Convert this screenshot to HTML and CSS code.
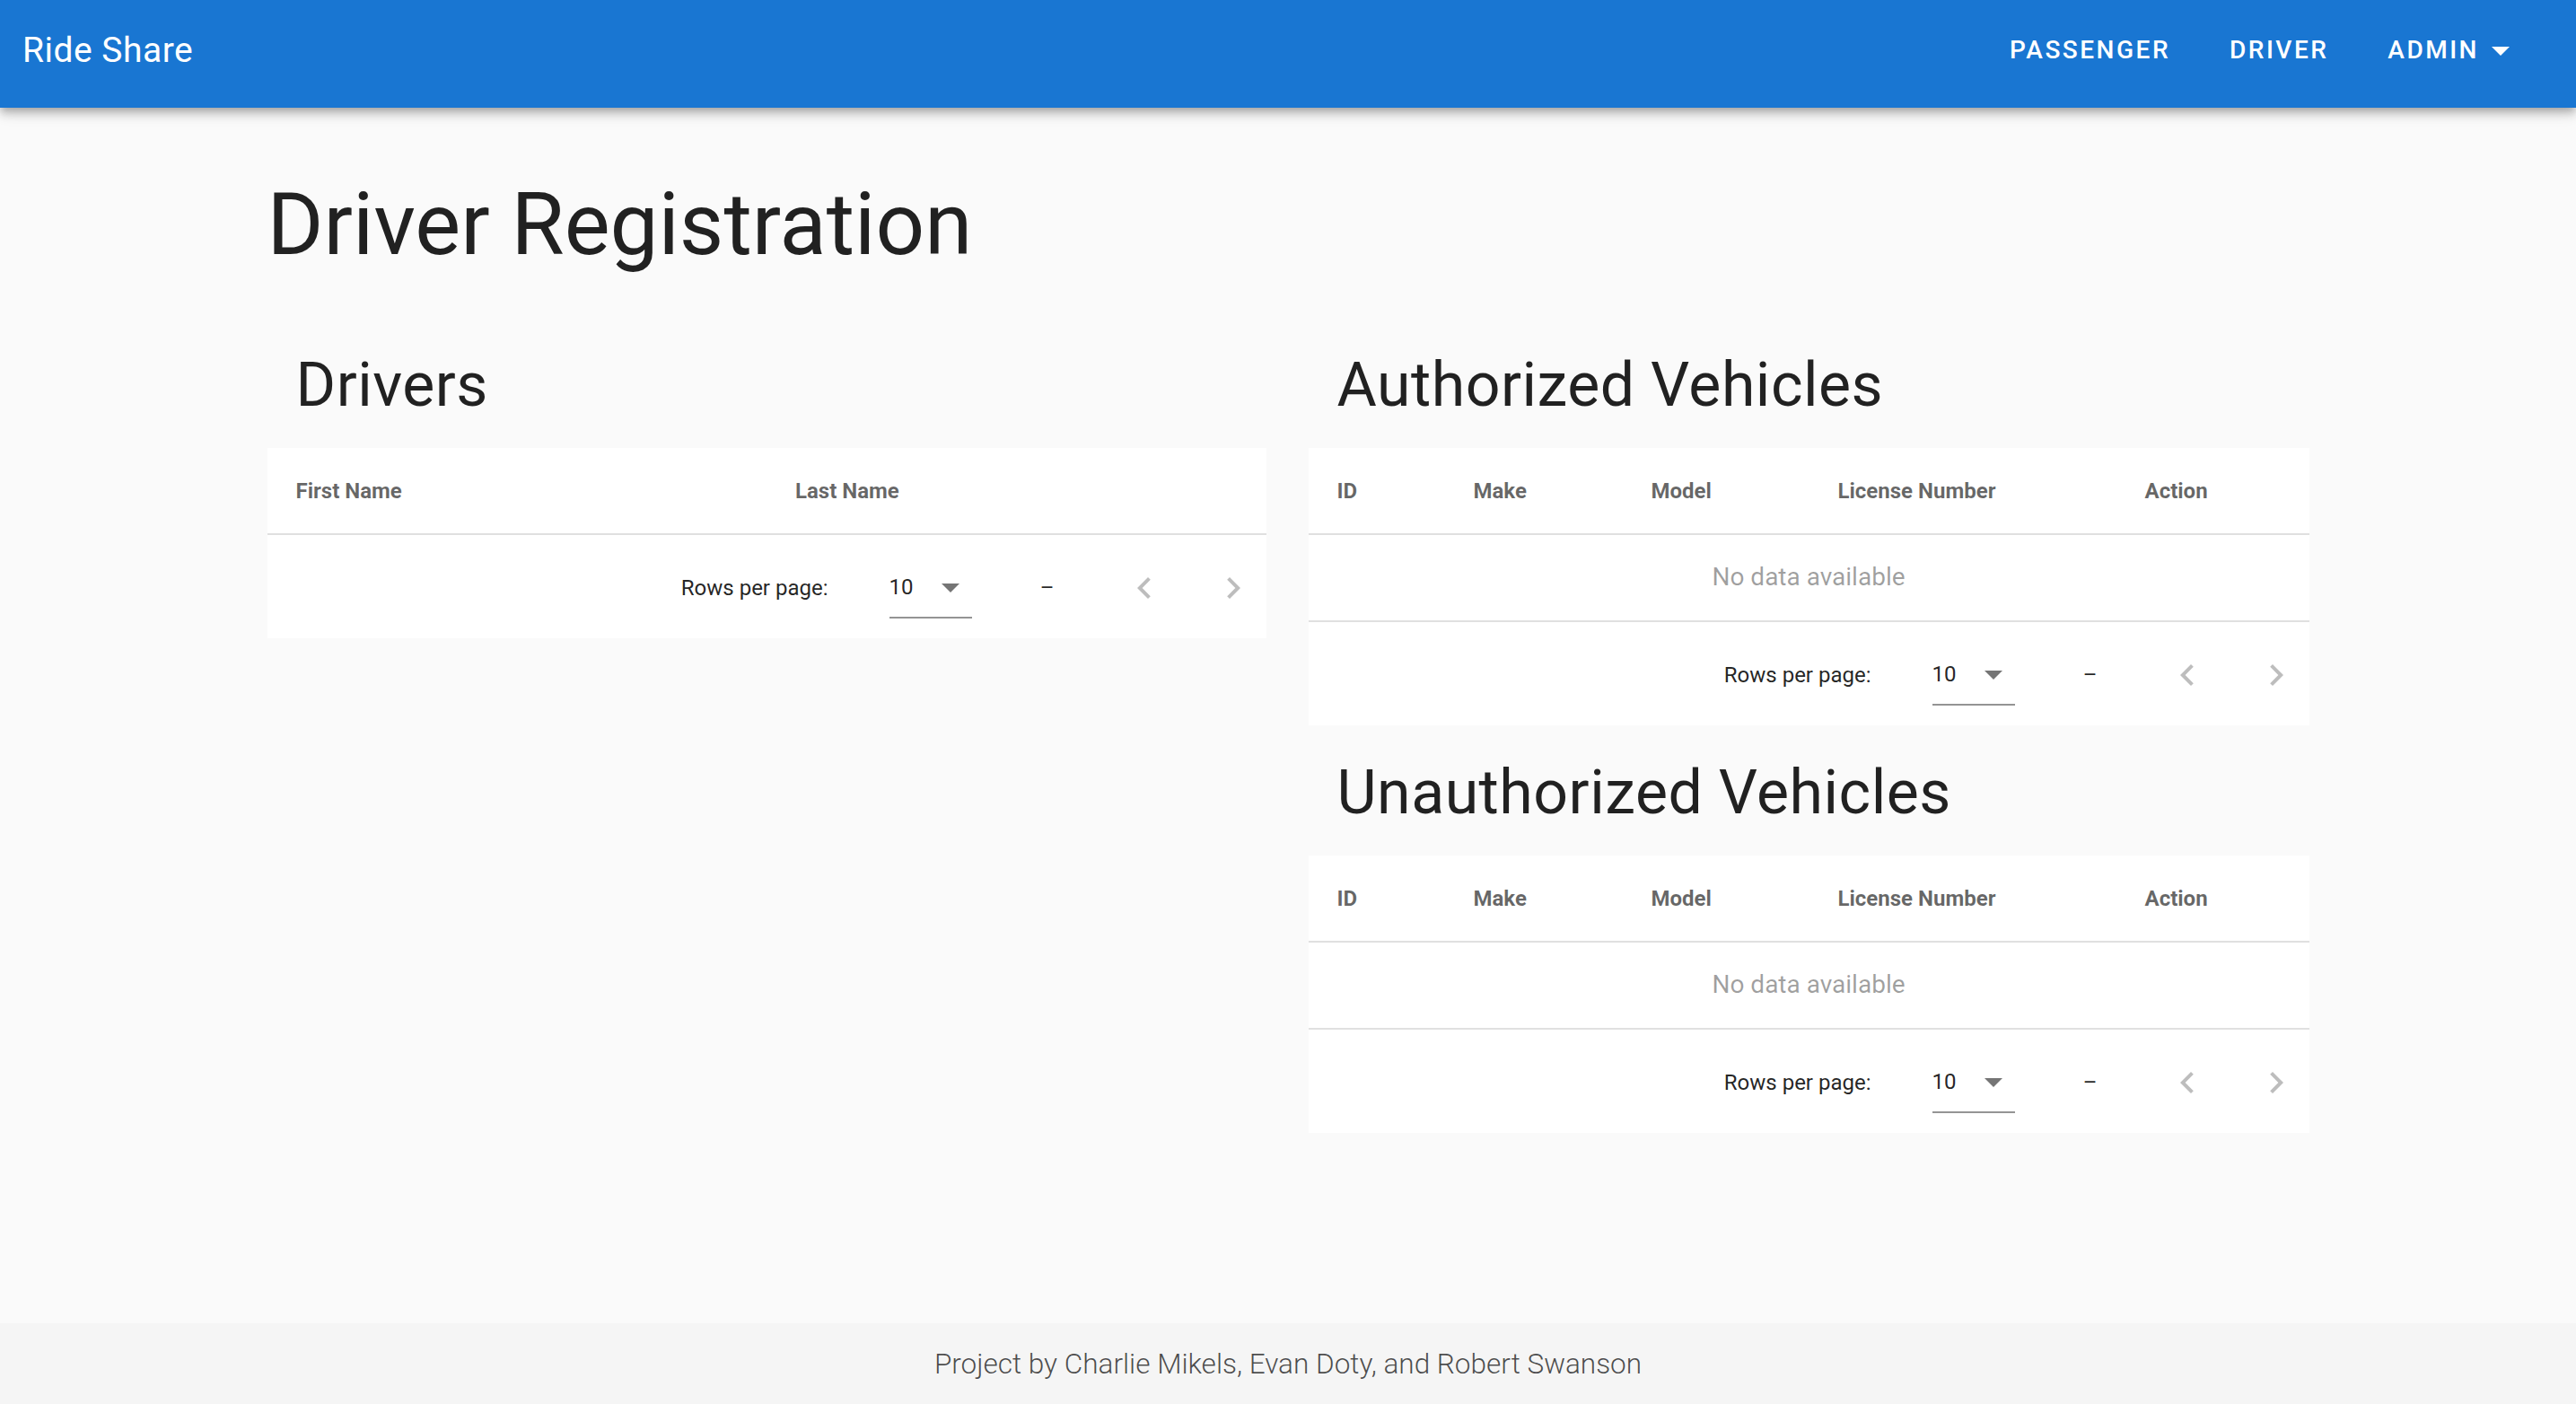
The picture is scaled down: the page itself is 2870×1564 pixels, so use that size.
FILE: index.html
```html
<!DOCTYPE html>
<html lang="en">
<head>
<meta charset="utf-8">
<title>Ride Share</title>
<link rel="stylesheet" href="styles.css">
</head>
<body>
<header class="app-bar">
  <div class="app-title">Ride Share</div>
  <nav class="nav">
    <a class="nav-btn">Passenger</a>
    <a class="nav-btn">Driver</a>
    <a class="nav-btn nav-btn--menu">Admin<svg class="icon icon--white" viewBox="0 0 24 24"><path d="M7,10L12,15L17,10H7Z"/></svg></a>
  </nav>
</header>

<main class="content">
  <h1 class="page-title">Driver Registration</h1>
  <div class="columns">
    <section class="col">
      <h2 class="section-title">Drivers</h2>
      <div class="table-card">
        <table class="data-table">
          <colgroup><col class="c-half"><col class="c-half"></colgroup>
          <thead><tr><th>First Name</th><th>Last Name</th></tr></thead>
        </table>
        <div class="table-footer">
          <span class="rows-label">Rows per page:</span>
          <div class="rows-select"><span>10</span><svg class="icon icon--grey" viewBox="0 0 24 24"><path d="M7,10L12,15L17,10H7Z"/></svg></div>
          <span class="range">–</span>
          <span class="page-btn"><svg class="icon icon--disabled" viewBox="0 0 24 24"><path d="M15.41,16.58L10.83,12L15.41,7.41L14,6L8,12L14,18L15.41,16.58Z"/></svg></span>
          <span class="page-btn page-btn--next"><svg class="icon icon--disabled" viewBox="0 0 24 24"><path d="M8.59,16.58L13.17,12L8.59,7.41L10,6L16,12L10,18L8.59,16.58Z"/></svg></span>
        </div>
      </div>
    </section>

    <section class="col">
      <h2 class="section-title">Authorized Vehicles</h2>
      <div class="table-card">
        <table class="data-table">
          <colgroup><col class="c-id"><col class="c-make"><col class="c-model"><col class="c-lic"><col class="c-act"></colgroup>
          <thead><tr><th>ID</th><th>Make</th><th>Model</th><th>License Number</th><th>Action</th></tr></thead>
          <tbody><tr><td class="no-data" colspan="5">No data available</td></tr></tbody>
        </table>
        <div class="table-footer">
          <span class="rows-label">Rows per page:</span>
          <div class="rows-select"><span>10</span><svg class="icon icon--grey" viewBox="0 0 24 24"><path d="M7,10L12,15L17,10H7Z"/></svg></div>
          <span class="range">–</span>
          <span class="page-btn"><svg class="icon icon--disabled" viewBox="0 0 24 24"><path d="M15.41,16.58L10.83,12L15.41,7.41L14,6L8,12L14,18L15.41,16.58Z"/></svg></span>
          <span class="page-btn page-btn--next"><svg class="icon icon--disabled" viewBox="0 0 24 24"><path d="M8.59,16.58L13.17,12L8.59,7.41L10,6L16,12L10,18L8.59,16.58Z"/></svg></span>
        </div>
      </div>

      <h2 class="section-title">Unauthorized Vehicles</h2>
      <div class="table-card">
        <table class="data-table">
          <colgroup><col class="c-id"><col class="c-make"><col class="c-model"><col class="c-lic"><col class="c-act"></colgroup>
          <thead><tr><th>ID</th><th>Make</th><th>Model</th><th>License Number</th><th>Action</th></tr></thead>
          <tbody><tr><td class="no-data" colspan="5">No data available</td></tr></tbody>
        </table>
        <div class="table-footer">
          <span class="rows-label">Rows per page:</span>
          <div class="rows-select"><span>10</span><svg class="icon icon--grey" viewBox="0 0 24 24"><path d="M7,10L12,15L17,10H7Z"/></svg></div>
          <span class="range">–</span>
          <span class="page-btn"><svg class="icon icon--disabled" viewBox="0 0 24 24"><path d="M15.41,16.58L10.83,12L15.41,7.41L14,6L8,12L14,18L15.41,16.58Z"/></svg></span>
          <span class="page-btn page-btn--next"><svg class="icon icon--disabled" viewBox="0 0 24 24"><path d="M8.59,16.58L13.17,12L8.59,7.41L10,6L16,12L10,18L8.59,16.58Z"/></svg></span>
        </div>
      </div>
    </section>
  </div>
</main>

<footer class="app-footer">Project by Charlie Mikels, Evan Doty, and Robert Swanson</footer>
</body>
</html>
```

FILE: styles.css
```css
* { box-sizing: border-box; }

html, body { margin: 0; padding: 0; }

body {
  font-family: Roboto, "Noto Sans", "Liberation Sans", sans-serif;
  background: #fafafa;
  color: rgba(0, 0, 0, 0.87);
  min-height: 100vh;
  display: flex;
  flex-direction: column;
}

/* ---------- top bar ---------- */
.app-bar {
  height: 120px;
  flex: 0 0 auto;
  background: #1976d2;
  color: #fff;
  display: flex;
  align-items: center;
  justify-content: space-between;
  padding: 0 60px 8px 25px;
  box-shadow: 0 4px 8px -2px rgba(0, 0, 0, 0.2), 0 8px 10px 0 rgba(0, 0, 0, 0.14), 0 2px 20px 0 rgba(0, 0, 0, 0.12);
  position: relative;
  z-index: 2;
}

.app-title {
  font-size: 39px;
  font-weight: 400;
  letter-spacing: 0.5px;
  line-height: 60px;
}

.nav {
  display: flex;
  align-items: center;
  gap: 66px;
}

.nav-btn {
  display: flex;
  align-items: center;
  font-size: 28px;
  font-weight: 500;
  letter-spacing: 2.5px;
  text-transform: uppercase;
  color: #fff;
  line-height: 48px;
}

.icon {
  width: 48px;
  height: 48px;
  display: block;
  flex: 0 0 auto;
}
.icon--white { fill: #fff; }
.icon--grey { fill: rgba(0, 0, 0, 0.54); }
.icon--disabled { fill: rgba(0, 0, 0, 0.26); }

/* ---------- content ---------- */
.content {
  flex: 1 0 auto;
  padding-top: 80px;
  display: flex;
  flex-direction: column;
  align-items: center;
}

.page-title {
  width: 2275px;
  margin: 0;
  font-size: 96px;
  line-height: 100px;
  font-weight: 400;
}

.columns {
  margin-top: 57px;
  display: grid;
  grid-template-columns: 1113px 1115px;
  column-gap: 47px;
  align-items: start;
}

.col {
  display: flex;
  flex-direction: column;
}

.section-title {
  margin: 0;
  padding: 32px 32px 30px;
  font-size: 68px;
  line-height: 80px;
  font-weight: 400;
  letter-spacing: 0.5px;
}

.table-card {
  background: #fff;
  margin-bottom: 3px;
}

.data-table {
  width: 100%;
  table-layout: fixed;
  border-collapse: separate;
  border-spacing: 0;
}

.c-half { width: 50%; }
.c-id { width: 152px; }
.c-make { width: 198px; }
.c-model { width: 208px; }
.c-lic { width: 342px; }
.c-act { width: 215px; }

.data-table th {
  height: 97px;
  padding: 0 32px;
  text-align: left;
  font-size: 24px;
  font-weight: 700;
  color: rgba(0, 0, 0, 0.6);
  border-bottom: 2px solid rgba(0, 0, 0, 0.12);
  white-space: nowrap;
}

.data-table td.no-data {
  height: 97px;
  padding: 0 32px 2px;
  text-align: center;
  font-size: 28px;
  color: rgba(0, 0, 0, 0.38);
  border-bottom: 2px solid rgba(0, 0, 0, 0.12);
}

.table-footer {
  height: 115px;
  display: flex;
  align-items: center;
  justify-content: flex-end;
  padding: 3px 13px 0 0;
  font-size: 24px;
  color: rgba(0, 0, 0, 0.87);
}

.rows-label {
  margin-right: 68px;
}

.rows-select {
  width: 92px;
  height: 67px;
  display: flex;
  align-items: center;
  justify-content: space-between;
  border-bottom: 2px solid rgba(0, 0, 0, 0.42);
  margin-right: 54px;
}

.range {
  width: 60px;
  text-align: center;
  margin-right: 54px;
}

.page-btn {
  width: 48px;
  height: 48px;
  display: flex;
}
.page-btn--next { margin-left: 51px; }

/* ---------- footer ---------- */
.app-footer {
  flex: 0 0 auto;
  height: 90px;
  background: #f5f5f5;
  display: flex;
  align-items: center;
  justify-content: center;
  font-size: 31.5px;
  font-weight: 300;
  color: rgba(0, 0, 0, 0.7);
}
```
